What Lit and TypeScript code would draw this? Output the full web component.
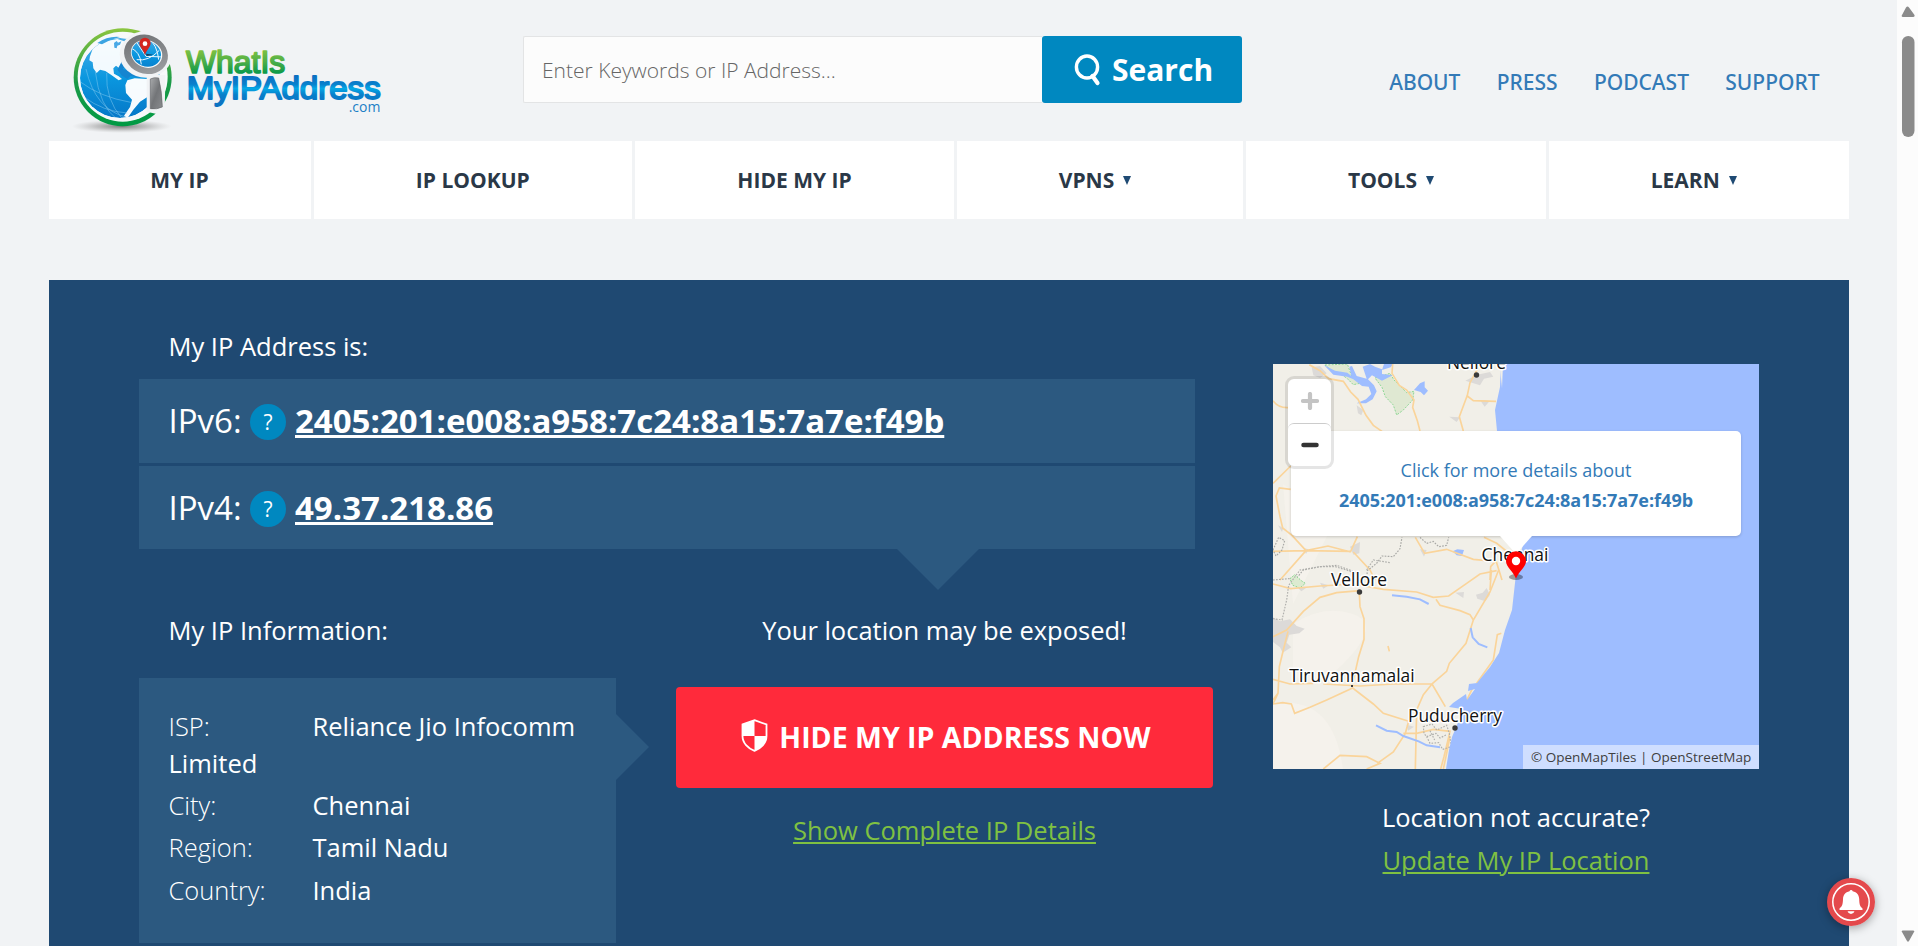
import { LitElement, html, css, svg } from "lit";
import { customElement } from "lit/decorators.js";

const ADDRESS_V6 = "2405:201:e008:a958:7c24:8a15:7a7e:f49b";
const ADDRESS_V4 = "49.37.218.86";

@customElement("site-logo")
class SiteLogo extends LitElement {
  static styles = css`
    :host { display: block; }
    svg { display: block; width: 320px; height: 113.33px; overflow: visible; }
    .word { font-family: "Liberation Sans", Arial, sans-serif; stroke-linejoin: round; stroke-linecap: round; }
    .com { font-family: "Open Sans", sans-serif; }
  `;
  render() {
    return html`
      <svg viewBox="75 40 960 340" aria-label="WhatIsMyIPAddress.com">
        <defs>
          <linearGradient id="ring" x1="0" y1="0" x2="0" y2="1"><stop offset="0" stop-color="#8bc53f" /><stop offset=".55" stop-color="#1b9a48" /><stop offset="1" stop-color="#009a44" /></linearGradient>
          <linearGradient id="sea" x1="0" y1="0" x2="0" y2="1"><stop offset="0" stop-color="#4dafe8" /><stop offset=".5" stop-color="#0a97df" /><stop offset="1" stop-color="#0678c8" /></linearGradient>
          <linearGradient id="metal" x1="0" y1="0" x2="1" y2="1"><stop offset="0" stop-color="#6b6d70" /><stop offset=".5" stop-color="#85878a" /><stop offset="1" stop-color="#a3a5a8" /></linearGradient>
          <linearGradient id="grip" x1="0" y1="0" x2="1" y2="1"><stop offset="0" stop-color="#a9abad" /><stop offset=".5" stop-color="#737578" /><stop offset="1" stop-color="#8a8c8f" /></linearGradient>
          <linearGradient id="green" gradientUnits="userSpaceOnUse" x1="0" y1="118" x2="0" y2="196"><stop offset="0" stop-color="#84c340" /><stop offset=".5" stop-color="#4cae48" /><stop offset="1" stop-color="#00964a" /></linearGradient>
          <linearGradient id="blue" gradientUnits="userSpaceOnUse" x1="0" y1="198" x2="0" y2="290"><stop offset="0" stop-color="#0b6fc2" /><stop offset=".28" stop-color="#0980cc" /><stop offset=".42" stop-color="#05a8e6" /><stop offset=".62" stop-color="#087fca" /><stop offset="1" stop-color="#0d70c0" /></linearGradient>
          <radialGradient id="shade"><stop offset="0" stop-color="#777" stop-opacity=".95" /><stop offset=".5" stop-color="#999" stop-opacity=".55" /><stop offset="1" stop-color="#bbb" stop-opacity="0" /></radialGradient>
          <clipPath id="disc"><circle cx="240" cy="205" r="120" /></clipPath>
          <clipPath id="lens"><ellipse cx="319" cy="132" rx="45" ry="38" transform="rotate(22 319 132)" /></clipPath>
        </defs>
        <ellipse cx="245" cy="350" rx="150" ry="20" fill="url(#shade)" />
        <circle cx="248" cy="203" r="147" fill="url(#ring)" />
        <circle cx="248" cy="201" r="135" fill="#f7f9fa" />
        <g clip-path="url(#disc)">
          <circle cx="240" cy="205" r="120" fill="url(#sea)" />
          <path d="M150 140 L158 118 L185 97 L232 88 L262 98 L262 140 L246 160 L238 176 L228 168 L220 176 L222 192 L236 200 L246 208 L236 212 L214 196 L196 184 L180 180 L170 190 L160 176 L158 158 L148 152Z" fill="#fff" opacity=".95" />
          <path d="M262 212 L284 206 L322 208 L336 226 L328 258 L300 276 L280 300 L262 326 L252 318 L270 292 L276 270 L258 250 L256 226Z" fill="#fff" opacity=".97" />
          <path d="M222 100l8-6 4 5 10-4-4 10-8 3-2 8-7-2z" fill="#4aa9e6" />
          <path d="M232 180l14-26 10 16-8 8 12 4 22-2 28 18-12 6-26-6-10 10-16-10z" fill="#1585d0" />
          <path d="M138 178Q166 300 258 322M166 186Q178 290 232 330M120 216Q180 262 272 278M132 262Q190 306 262 310M200 190Q196 270 246 326" fill="none" stroke="#8fd0f3" stroke-width="2" opacity=".7" />
        </g>
        <path d="M172 100Q204 78 240 82Q212 88 186 104Z" fill="#3ba4e2" />
        <ellipse cx="318" cy="134" rx="79" ry="70" fill="#f1f3f5" />
        <path d="M320 196L376 196L374 318L320 306Z" fill="#f1f3f5" />
        <path d="M331 208Q342 202 356 205Q366 246 367 292Q350 300 331 297Z" fill="url(#grip)" stroke="#66686b" stroke-width="2" />
        <g transform="rotate(22 318 134)"><ellipse cx="318" cy="134" rx="67" ry="58" fill="url(#metal)" /><ellipse cx="319" cy="132" rx="48" ry="41" fill="#f6f8f9" /></g>
        <g clip-path="url(#lens)">
          <rect x="260" y="80" width="120" height="110" fill="url(#sea)" />
          <path d="M270 114Q300 124 304 164M286 92L318 140L372 142M290 150Q326 156 358 122M322 84Q352 104 356 150" fill="none" stroke="#eef8fd" stroke-width="3" />
          <path d="M318 132l22 3-20 4z" fill="#15415e" />
        </g>
        <path d="M315 137C309 118 298 112 298 101a17 17 0 1 1 34 0C332 112 321 118 315 137Z" fill="#d3251f" />
        <circle cx="315" cy="102" r="7" fill="#fff" />
        <text class="word" x="438" y="189" font-size="93" textLength="298" lengthAdjust="spacingAndGlyphs" fill="url(#green)" stroke="url(#green)" stroke-width="5">WhatIs</text>
        <text class="word" x="440" y="269" font-size="92" textLength="582" lengthAdjust="spacingAndGlyphs" fill="url(#blue)" stroke="url(#blue)" stroke-width="5.500">MyIPAddress</text>
        <text class="com" x="926" y="308" font-size="42" textLength="95" lengthAdjust="spacingAndGlyphs" fill="#1c7fc6">.com</text>
      </svg>
    `;
  }
}

@customElement("location-map")
class LocationMap extends LitElement {
  static styles = css`
    :host { display: block; position: relative; width: 486px; height: 405px; overflow: hidden; }
    .tiles { display: block; width: 486px; height: 405px; }
    .place { font-family: "Open Sans", sans-serif; font-size: 17.4px; fill: #111; stroke: #fff; stroke-width: 3px; stroke-linejoin: round; paint-order: stroke; text-anchor: middle; }
    .popup {
      position: absolute; left: 18px; top: 67px; width: 450px; height: 105px; box-sizing: border-box;
      padding-top: 24px; background: #fff; border-radius: 5px; box-shadow: 0 1px 3px rgba(0, 0, 0, .18);
      font-size: 18px; line-height: 30px; text-align: center; color: #337ab7;
    }
    .popup strong { display: block; font-weight: 700; }
    .pin { position: absolute; left: 213px; top: 170px; width: 60px; height: 50px; }
    .zoom {
      position: absolute; left: 12px; top: 12px; width: 43px; height: 87px; border: 3px solid rgba(0, 0, 0, .1);
      border-radius: 9px; background: #fff; background-clip: padding-box; display: grid; grid-template-rows: 44px 43px;
    }
    .zoom div { display: grid; place-items: center; border-radius: 6px; }
    .zoom .out { border-top: 1px solid #ccc; }
    .zoom svg { width: 18px; height: 18px; display: block; }
    .credit {
      position: absolute; right: 0; bottom: 0; height: 24px; line-height: 24px; padding: 0 8px; width: 220px; white-space: nowrap;
      background: rgba(255, 255, 255, .5); font-size: 13.5px; color: #404040;
    }
  `;
  render() {
    return html`
      <svg class="tiles" viewBox="0 0 486 405">
        <rect width="486" height="405" fill="#f1efe8" />
        <path d="M20 260Q50 240 80 250T70 300Q40 330 20 310M0 340Q60 330 70 405H0ZM10 120L60 160L20 240Z" fill="#f6f2ec" opacity=".8" />
        <g transform="scale(.33333) translate(-39 -42)">
          <path d="M195 45L262 42L275 78L300 100L280 104L262 86L240 70L215 62Z M345 84L390 70L402 90L440 128L462 124L458 150L430 180L410 195L400 165L376 140L366 112Z" fill="#dfe8d2" stroke="#8fd796" stroke-width="3" stroke-dasharray="6 4" />
          <path d="M192 45L225 62L262 68L274 78L268 50L276 48L290 78L320 86L308 50L330 42L345 50L366 58L366 72L398 76L366 92L336 76L324 88L342 106L350 124L338 148L318 160L290 160L318 148L334 132L326 110L306 108L280 88L262 80L220 74Z" fill="#9ebdff" />
          <path d="M372 42L366 60L392 52L400 42ZM462 120L480 100L494 94L494 112L504 122L492 136L482 126Z M578 604L592 598L612 600L606 618L590 616Z" fill="#9ebdff" />
          <path d="M155 52L180 48L200 70L180 84L160 76ZM290 166L310 180L304 196L294 190ZM616 92L652 74L690 66L700 80L672 86L660 106ZM568 200L600 202L590 216ZM660 150L690 152L674 170ZM270 590L300 576L298 610L280 614ZM130 594L146 598L138 612ZM480 598L500 600L492 620ZM54 526L70 534L66 546Z" fill="#dcdad8" />
          <g fill="none" stroke="#fad49a" stroke-width="5">
            <path d="M39 152Q54 174 84 173M148 44L180 62L206 86L250 94L272 126L294 148L318 196L340 226L366 244M398 42L396 70L418 106L440 120L462 150L458 172L472 212L480 243M655 52L630 98L622 136L598 200L610 243M622 138L640 152L708 154M39 400L92 348M92 418L58 414L48 438L60 500L68 534L96 556L138 602L272 604L292 560M39 604L138 602L204 588L272 606M60 690L138 602M280 606L330 660L345 690M466 562L494 610L560 598L640 628L680 632M672 562L710 580L750 612M690 690L692 650L708 632L726 690" />
          </g>
          <path d="M39 600L56 562L74 572L66 600L48 618ZM320 690L322 662L350 640L366 618L400 620L420 596L426 562M39 690L110 684L130 660L180 650L230 646L290 668M480 562L500 580L520 574L536 590L560 586L566 562" fill="none" stroke="#a9a9a6" stroke-width="3.5" stroke-dasharray="5 4" />
        </g>
        <g transform="scale(.33333) translate(-39 588)">
          <path d="M39 172L60 184L90 178L110 198L134 206L118 220L88 224L80 248L94 262L68 278L60 262L39 246ZM648 104L668 98L680 84L690 104L676 124L652 116ZM586 98L612 96L610 114ZM110 80L138 84L124 94ZM180 68L206 76L190 86ZM440 494L462 500L444 512Z" fill="#dcdad8" />
          <path d="M90 56L104 44L124 62L136 70L120 84L98 76Z" fill="#dcebd0" stroke="#83d38b" stroke-width="3" stroke-dasharray="5 4" />
          <g fill="none" stroke="#fad49a" stroke-width="5">
            <path d="M39 72L92 86L180 78L280 72L370 88L470 96L520 112L566 108L620 70L660 42L710 32M39 230L80 210L130 154L180 112L230 98L300 92M298 100L300 140L312 176L312 238L296 290L278 370M39 358L90 372L160 370M190 372L300 378L400 372L516 372L560 334L568 310L618 250L640 180L690 96L716 30M528 118L540 136L600 152L630 164L640 180M84 214L70 270L58 320L54 400L39 432L68 428L94 432L104 460L150 442L200 420L278 384L340 432L370 460L446 484L436 520L400 576L352 610M516 372L490 404L470 450L466 627M516 372L556 440M39 420L54 400M190 627L240 586L320 590L360 610L320 627M430 520L470 520L520 508L570 514L552 590L542 627M570 530L560 580L550 627M640 380L606 450M650 370L700 300L712 224L724 220M694 30L690 90M384 258L388 274" />
          </g>
          <path d="M39 176L66 180L80 120L86 76L120 30L180 20L226 20L290 40M490 500L516 492L530 510L560 496L568 520L574 560L548 568L536 548L510 550L500 530L492 520ZM500 530L528 520L540 534L560 524M510 512L524 540M320 30L340 0L390 8" fill="none" stroke="#b0b0ad" stroke-width="3.5" stroke-dasharray="5 4" />
          <path d="M396 106L440 110L480 118L506 132M348 496L380 512L410 516L430 528L476 544L500 556L540 562M632 204L638 232L656 252L682 262" fill="none" stroke="#9ebdff" stroke-width="6" />
        </g>
        <path d="M228 0L227 23L222 46L224 67L237 110L252 172L243 210L239 246L232 266L226 289L217 303L204 319L196 320L195 327L202 325L194 336L193 330L180 339L176 343L189 345L184 361L179 373L176 386L173 405H486V0Z" fill="#9ebdff" />
        <path d="M227 4L228 0H230L229 24Z" fill="#f1efe8" />
        <g fill="#3a3a3a"><circle cx="203.5" cy="11" r="2.7" /><circle cx="86.5" cy="228" r="2.7" /><circle cx="182" cy="364" r="2.7" /><rect x="78" y="321" width="2" height="2" /></g>
        <text class="place" x="203.5" y="5">Nellore</text>
        <text class="place" x="242" y="197">Chennai</text>
        <text class="place" x="86" y="222">Vellore</text>
        <text class="place" x="79" y="318">Tiruvannamalai</text>
        <text class="place" x="182" y="358">Puducherry</text>
      </svg>
      <div class="popup">Click for more details about<strong>${ADDRESS_V6}</strong></div>
      <svg class="pin" viewBox="0 0 60 50">
        <path d="M14 2H46L30 20Z" fill="#fff" />
        <ellipse cx="30" cy="43" rx="7" ry="3" fill="#000" opacity=".35" />
        <path d="M30 44.5C27 37 20 33 20 27.200a10 10 0 0 1 20 0C40 33 33 37 30 44.500Z" fill="#fe0000" />
        <circle cx="30" cy="27" r="4.200" fill="#fff" />
      </svg>
      <div class="zoom">
        <div><svg viewBox="0 0 18 18"><path d="M9 2V16M2 9H16" stroke="#c4c4c4" stroke-width="4.200" stroke-linecap="round" /></svg></div>
        <div class="out"><svg viewBox="0 0 18 18"><path d="M2.500 9H15.500" stroke="#333" stroke-width="4.500" stroke-linecap="round" /></svg></div>
      </div>
      <div class="credit">© OpenMapTiles | OpenStreetMap</div>
    `;
  }
}

@customElement("app-root")
class AppRoot extends LitElement {
  static styles = css`
    :host { display: block; height: 946px; overflow: hidden; position: relative; background: #f1f3f5; font-family: "Open Sans", sans-serif; color: #fff; }
    .page { width: 1800px; margin-left: 48.5px; }
    .top { display: flex; align-items: flex-start; height: 141px; }
    .logo { margin: 23.3px 0 0 16.5px; }
    .search { display: flex; width: 719.5px; height: 67px; margin: 36px 0 0 137.5px; }
    .field { flex: 1; box-sizing: border-box; border: 1px solid #e3e4e5; border-right: 0; background: #fcfcfc; padding: 1px 0 0 18.5px; line-height: 65px; font-size: 21px; font-weight: 300; color: #666; border-radius: 2px 0 0 2px; }
    .go { width: 200px; box-sizing: border-box; padding-left: 31.5px; display: flex; align-items: center; border-radius: 3px; background: #0088c0; font-size: 30px; font-weight: 700; }
    .go svg { width: 27px; height: 32px; margin-right: 11.5px; }
    .links { display: flex; gap: 36.3px; margin: 67px 29px 0 auto; font-family: "Noto Sans", sans-serif; font-weight: 500; font-size: 21px; line-height: 30px; color: #337ab7; }
    .menu { display: grid; grid-template-columns: 262px 318.500px 319px 286px 300px 1fr; gap: 3px; height: 78px; }
    .menu div { background: #fff; color: #2a3847; font-size: 21px; font-weight: 700; line-height: 78px; display: flex; align-items: center; justify-content: center; }
    .caret { margin: 0 10px 0 9px; border: 4.7px solid transparent; border-top: 9px solid #1f4a73; border-bottom: 0; }
    .panel { display: flex; gap: 78px; margin-top: 61px; height: 666px; background: #1f4972; box-sizing: border-box; padding-left: 90.5px; font-size: 25.5px; line-height: 38px; }
    .main { width: 1056px; }
    .heading { padding: 47px 0 14px 29.5px; }
    .row { display: flex; align-items: center; box-sizing: border-box; height: 83px; padding-left: 29.5px; background: #2c5980; font-size: 33px; line-height: 83px; }
    .row.first { height: 84px; line-height: 84px; margin-bottom: 3px; }
    .kind { width: 81.5px; }
    .help { width: 36px; height: 36px; margin: 2px 9px 0 0; border-radius: 50%; background: #0088c0; font-size: 21px; line-height: 36px; text-align: center; }
    .address { font-weight: 700; text-decoration: underline; text-decoration-thickness: 3px; text-underline-offset: 2px; }
    .down { display: block; width: 0; margin: 0 0 -41px 758px; border: 41px solid transparent; border-top-color: #2c5980; border-bottom: 0; }
    .halves { display: grid; grid-template-columns: 477px 537px; column-gap: 60px; padding-top: 62px; }
    .caption { padding-left: 29.5px; margin-bottom: 29px; }
    .card { position: relative; box-sizing: border-box; height: 265px; padding: 30px 27px 0 29.5px; background: #2c5980; line-height: 37px; }
    .card::after { content: ""; position: absolute; left: 100%; top: 36px; border: 33.500px solid transparent; border-left-color: #2c5980; border-right: 0; }
    .fact { margin-bottom: 5.2px; }
    .name { display: inline-block; width: 144px; font-weight: 300; }
    .exposure { text-align: center; }
    .hide { display: flex; align-items: center; justify-content: center; height: 101px; margin: 38px 0 23px; padding: 0 0 2px 4px; box-sizing: border-box; border-radius: 4px; background: #ff2a3b; font-size: 28.5px; font-weight: 700; }
    .hide svg { width: 27px; height: 33px; margin: -3px 11px 0 -1px; }
    .link { color: #7fc142; text-decoration: underline; text-decoration-thickness: 2px; text-underline-offset: 2px; }
    .side { width: 486px; padding-top: 84px; text-align: center; }
    .side location-map { text-align: left; margin-bottom: 29px; }
    .update { margin-top: 5px; }
    .bell { position: absolute; left: 1827px; top: 878px; width: 48px; height: 48px; border-radius: 50%; box-shadow: 0 2px 10px rgba(0, 0, 0, .35); }
    .bell svg { display: block; width: 48px; height: 48px; }
    .scroll { position: absolute; top: 0; right: 0; width: 21px; height: 946px; background: #fcfcfc; }
    .scroll svg { display: block; }
  `;

  render() {
    const menu: [string, boolean][] = [["MY IP", false], ["IP LOOKUP", false], ["HIDE MY IP", false], ["VPNS", true], ["TOOLS", true], ["LEARN", true]];
    const facts = [["ISP:", "Reliance Jio Infocomm Limited"], ["City:", "Chennai"], ["Region:", "Tamil Nadu"], ["Country:", "India"]];
    return html`
      <div class="page">
        <div class="top">
          <site-logo class="logo"></site-logo>
          <div class="search">
            <div class="field">Enter Keywords or IP Address...</div>
            <div class="go">
              <svg viewBox="0 0 27 32"><ellipse cx="13" cy="13" rx="10.600" ry="11" fill="none" stroke="#fff" stroke-width="3.400" /><path d="M18.500 22L23.500 29" stroke="#fff" stroke-width="4.200" stroke-linecap="round" /></svg>Search
            </div>
          </div>
          <div class="links">${["ABOUT", "PRESS", "PODCAST", "SUPPORT"].map((l) => html`<span>${l}</span>`)}</div>
        </div>
        <div class="menu">${menu.map(([label, drop]) => html`<div>${label}${drop ? html`<i class="caret"></i>` : ""}</div>`)}</div>
        <div class="panel">
          <div class="main">
            <div class="heading">My IP Address is:</div>
            <div class="row first"><span class="kind">IPv6:</span><span class="help">?</span><span class="address">${ADDRESS_V6}</span></div>
            <div class="row"><span class="kind">IPv4:</span><span class="help">?</span><span class="address">${ADDRESS_V4}</span></div>
            <i class="down"></i>
            <div class="halves">
              <div>
                <div class="caption">My IP Information:</div>
                <div class="card">${facts.map(([k, v]) => html`<div class="fact"><span class="name">${k}</span>${v}</div>`)}</div>
              </div>
              <div class="exposure">
                <div>Your location may be exposed!</div>
                <div class="hide">
                  <svg viewBox="0 0 27 33"><path d="M13.500 1.200L25.500 5.500V17C25.500 24 20 29.500 13.500 31.800C7 29.500 1.500 24 1.500 17V5.500Z" fill="none" stroke="#fff" stroke-width="1.800" /><path d="M13.500 1V17H1V5.500ZM13.500 17H26C26 24 20 29.500 13.500 32Z" fill="#fff" /></svg>HIDE MY IP ADDRESS NOW
                </div>
                <div><span class="link">Show Complete IP Details</span></div>
              </div>
            </div>
          </div>
          <div class="side">
            <location-map></location-map>
            <div>Location not accurate?</div>
            <div class="update"><span class="link">Update My IP Location</span></div>
          </div>
        </div>
      </div>
      <div class="scroll">
        <svg width="21" height="946">${svg`<path d="M9 7.500Q10.500 5.500 12 7.500L17.500 15Q18 17 16 17H6Q4 17 5 15ZM5 932Q4 930.500 6 930.500H16Q18 930.500 17 932L12 941Q11 942.500 10 941Z" fill="#8b8b8b" /><rect x="5" y="36" width="12.500" height="101" rx="6.200" fill="#8b8b8b" />`}</svg>
      </div>
      <div class="bell">
        <svg viewBox="0 0 48 48"><circle cx="24" cy="24" r="24" fill="#e4494c" /><circle cx="24" cy="24" r="18.200" fill="none" stroke="#fff" stroke-width="1.500" /><path d="M22.500 13.200A1.700 1.700 0 0 1 25.700 13.200C30 14 32 17 32.200 21C32.400 26 32.600 28 35.500 30.500V32H12.500V30.500C15.500 28 15.800 26 16 21C16.200 17 18.300 14 22.500 13.200ZM20.500 33.200H27.500Q26.500 36 24 36T20.500 33.200Z" fill="#fff" /></svg>
      </div>
    `;
  }
}
